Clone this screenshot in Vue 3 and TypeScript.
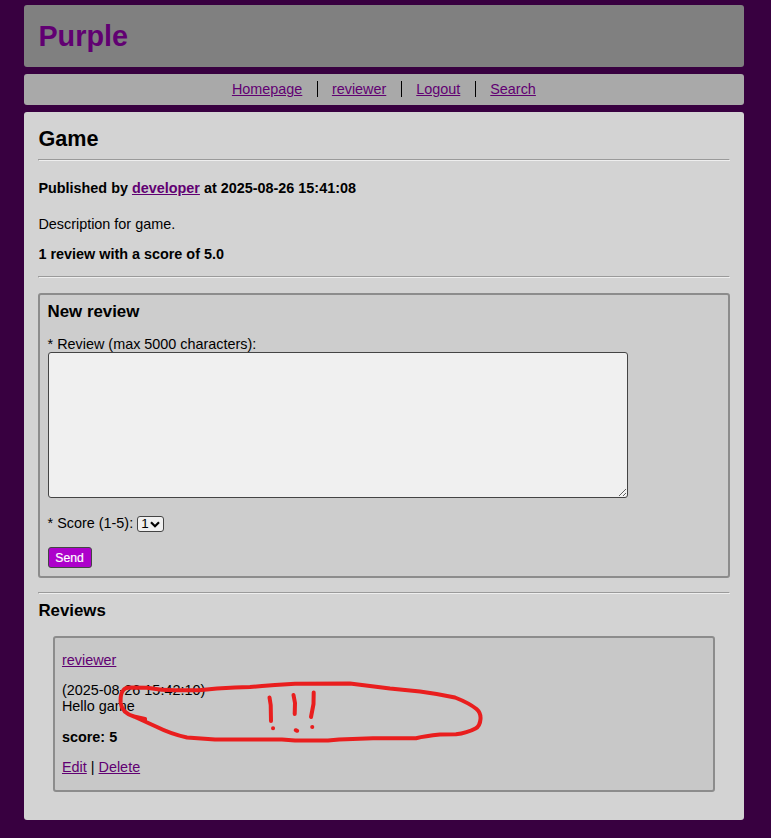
<script setup lang="ts">
import { ref } from 'vue'

interface Review {
  author: string
  time: string
  text: string
  score: number
}

const links: string[] = ['Homepage', 'reviewer', 'Logout', 'Search']
const scores: number[] = [1, 2, 3, 4, 5]
const score = ref<number>(1)
const message = ref<string>('')
const reviews: Review[] = [
  { author: 'reviewer', time: '2025-08-26 15:42:10', text: 'Hello game', score: 5 },
]
</script>

<template>
  <div class="page">
    <header class="header"><h1>Purple</h1></header>
    <nav class="nav">
      <span v-for="link in links" :key="link" class="nav-item"><a href="#">{{ link }}</a></span>
    </nav>
    <main class="content">
      <h2>Game</h2>
      <hr />
      <p class="published">Published by <a href="#">developer</a> at 2025-08-26 15:41:08</p>
      <p class="description">Description for game.</p>
      <p class="summary">1 review with a score of 5.0</p>
      <hr />
      <form class="new-review" @submit.prevent>
        <h3>New review</h3>
        <label class="review-label" for="message">* Review (max 5000 characters):</label>
        <textarea id="message" v-model="message" maxlength="5000"></textarea>
        <div class="score-row">
          <label for="score">* Score (1-5):</label>
          <span class="select">
            <select id="score" v-model="score">
              <option v-for="n in scores" :key="n" :value="n">{{ n }}</option>
            </select>
            <svg class="chevron" viewBox="0 0 10 7"><path d="M1 1.2 L5 5.2 L9 1.2" /></svg>
          </span>
        </div>
        <button type="submit">Send</button>
      </form>
      <hr />
      <h3 class="reviews-title">Reviews</h3>
      <article v-for="r in reviews" :key="r.time" class="review">
        <p><a href="#">{{ r.author }}</a></p>
        <p>({{ r.time }})<br />{{ r.text }}</p>
        <p class="score">score: {{ r.score }}</p>
        <p><a href="#">Edit</a> | <a href="#">Delete</a></p>
        <svg class="scribble" viewBox="0 0 380 70">
          <path d="M28 39 L17 36.500 Q5 33 3.700 23 Q3 14 6.500 10 Q8 7.700 13 7.500 L30 7.700 Q46 10.500 60 10.300 L82 10.300 Q100 8 118 7.500 L133 7 L145 6 L158 5 L178 3.800 L233 3.500 L273 8.500 L303 11.500 Q322 14 338 17.500 Q352 23 359.500 29 Q364 33 363.500 39 Q363 46 358.500 48.500 Q350 53 339 54.300 L323 54.500 Q308 56 299 58.200 L256 58.200 L222 59.500 L211 60.500 L178 60.500 L165 59.500 L98 59.500 L70 57.500 Q54 54 40 47 L17 36.500 L28 40" />
          <path d="M152.500 17.500 L153.700 25 L154 41 M176.500 15 L178 23 L177.700 34 M196.700 12.500 L196.500 24 L194 37 M156 48.200 h.1 M178.700 50.200 l1.500 .6 M195.200 47 h.1" />
        </svg>
      </article>
    </main>
  </div>
</template>

<style>
body {
  background: #380040;
}
</style>

<style scoped>
.page {
  box-sizing: border-box;
  width: 720px;
  height: 838px;
  margin-left: 24px;
  padding-top: 5px;
  display: flex;
  flex-direction: column;
  gap: 7px;
  font: 14.4px/16px "Liberation Sans", Arial, sans-serif;
  color: #000;
}
h1, h2, h3, p {
  margin: 0;
}
a {
  color: #610072;
}
hr {
  box-sizing: border-box;
  height: 2px;
  margin: 0;
  border: 1px solid;
  border-color: #9a9a9a #eee #eee #9a9a9a;
}
.header, .nav, .content {
  box-sizing: border-box;
  border-radius: 3px;
}
.header {
  height: 62px;
  padding: 15px 14.4px 0;
  background: #808080;
}
h1 {
  font-size: 28.8px;
  line-height: 33px;
  color: #610072;
}
.nav {
  display: flex;
  justify-content: center;
  height: 31px;
  padding-top: 7px;
  background: #a9a9a9;
}
.nav-item {
  height: 16px;
  padding: 0 14.6px 0 14.4px;
}
.nav-item + .nav-item {
  border-left: 1px solid #000;
}
.nav-item:first-child {
  padding-right: 14.2px;
}
.content {
  height: 708px;
  padding: 15px 14.4px 0;
  background: #d3d3d3;
}
h2 {
  font-size: 21.6px;
  line-height: 24px;
  margin-bottom: 8px;
}
h3 {
  font-size: 16.85px;
  line-height: 19px;
}
.published {
  margin-top: 19px;
  font-weight: bold;
}
.description {
  margin-top: 20px;
}
.summary {
  margin: 14px 0;
  font-weight: bold;
}
.new-review {
  box-sizing: border-box;
  height: 285px;
  margin: 15px 0 14px;
  padding: 7px 7.2px 0;
  border: 2px solid #8c8c8c;
  border-radius: 3px;
  background: #cdcdcd;
}
.review-label {
  display: block;
  margin-top: 15px;
}
textarea {
  display: block;
  box-sizing: border-box;
  width: 580px;
  height: 146px;
  margin: 0;
  padding: 2px;
  border: 1px solid #444;
  border-radius: 3px;
  background: #f0f0f0;
}
.score-row {
  display: flex;
  gap: 4px;
  height: 16px;
  margin-top: 17px;
}
.select {
  position: relative;
  width: 27px;
  height: 16px;
  margin-top: 1px;
}
select {
  display: block;
  box-sizing: border-box;
  width: 27px;
  height: 16px;
  padding: 0 0 0 3px;
  appearance: none;
  border: 1px solid #444;
  border-radius: 3px;
  background: #f0f0f0;
  font: 13.33px/14px "Liberation Sans", Arial, sans-serif;
  color: #000;
}
.chevron {
  position: absolute;
  top: 5px;
  right: 4px;
  width: 10px;
  height: 7px;
  fill: none;
  stroke: #000;
  stroke-width: 2.2;
  pointer-events: none;
}
button {
  display: block;
  box-sizing: border-box;
  width: 44px;
  height: 21px;
  margin-top: 16px;
  padding: 1px 0 0;
  border: 1px solid #444;
  border-radius: 3px;
  background: #ad00cb;
  font: 12.2px/18px "Liberation Sans", Arial, sans-serif;
  -webkit-text-stroke: 0.2px #fff;
  color: #fff;
}
.reviews-title {
  margin-top: 7px;
}
.review {
  position: relative;
  display: flex;
  flex-direction: column;
  gap: 14px;
  box-sizing: border-box;
  height: 156px;
  margin: 16px 14.4px 0;
  padding: 14px 7.2px 0;
  border: 2px solid #8c8c8c;
  border-radius: 3px;
  background: #c8c8c8;
}
.score {
  margin: 1px 0 0;
  font-weight: bold;
}
.scribble {
  position: absolute;
  left: 62px;
  top: 42px;
  width: 380px;
  height: 70px;
  fill: none;
  stroke: #e91e1e;
  stroke-width: 4;
  stroke-linecap: round;
  stroke-linejoin: round;
}
</style>
